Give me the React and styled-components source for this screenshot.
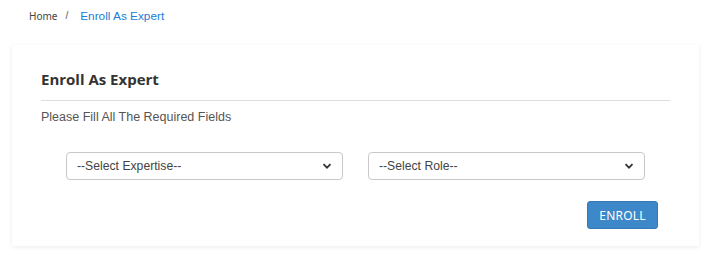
import styled, { createGlobalStyle } from "styled-components";

const GlobalStyle = createGlobalStyle`
  body {
    margin: 0;
    background: #ffffff;
    font-family: "Liberation Sans", Arial, sans-serif;
  }
`;

const Page = styled.div`
  width: 711px;
  height: 255px;
  padding: 0 12px;
  box-sizing: border-box;
`;

const Breadcrumb = styled.div`
  display: flex;
  align-items: center;
  height: 31px;
  padding-left: 17px;
  margin-bottom: 14px;
`;

const Crumb = styled.span`
  font-family: "Noto Sans", sans-serif;
  font-size: 10px;
  color: #444;
`;

const Separator = styled.span`
  font-size: 10px;
  color: #555;
  margin: 0 12px 0 8px;
`;

const Current = styled.span`
  font-size: 11.8px;
  color: #1c7cd6;
`;

const Card = styled.div`
  background: #fff;
  height: 201px;
  box-sizing: border-box;
  padding: 24px 29px 0;
  box-shadow: 0 1px 4px rgba(0, 0, 0, 0.08);
`;

const Title = styled.h2`
  margin: 0;
  font-family: "Open Sans", sans-serif;
  font-weight: 700;
  font-size: 15px;
  color: #333;
  line-height: 20px;
  padding-bottom: 11px;
  border-bottom: 1px solid #ddd;
`;

const Subtitle = styled.p`
  margin: 8px 0 0;
  font-size: 12.5px;
  color: #555;
  line-height: 16px;
`;

const Fields = styled.div`
  display: grid;
  grid-template-columns: 1fr 1fr;
  gap: 25px;
  padding: 0 25px;
  margin-top: 27px;
`;

const SelectBox = styled.div`
  height: 28px;
  border: 1px solid #c9c9c9;
  border-radius: 4px;
  box-sizing: border-box;
  display: flex;
  align-items: center;
  padding: 0 10px;
  font-size: 12.2px;
  color: #444;
`;

const Chevron = styled.svg`
  margin-left: auto;
  width: 10px;
  height: 10px;
`;

const Actions = styled.div`
  display: flex;
  justify-content: flex-end;
  padding-right: 12px;
  margin-top: 21px;
`;

const Button = styled.button`
  height: 28px;
  width: 71px;
  background: #3d88c9;
  border: 1px solid #3479b6;
  border-radius: 3px;
  color: #fff;
  font-family: "Noto Sans", sans-serif;
  font-size: 12px;
  letter-spacing: 0.2px;
  padding: 0;
`;

const Select = ({ label }) => (
  <SelectBox>
    {label}
    <Chevron viewBox="0 0 10 10">
      <path d="M1.5 3.2 L5 6.7 L8.5 3.2" fill="none" stroke="#333" strokeWidth="1.8" />
    </Chevron>
  </SelectBox>
);

export default function App() {
  return (
    <Page>
      <GlobalStyle />
      <Breadcrumb>
        <Crumb>Home</Crumb>
        <Separator>/</Separator>
        <Current>Enroll As Expert</Current>
      </Breadcrumb>
      <Card>
        <Title>Enroll As Expert</Title>
        <Subtitle>Please Fill All The Required Fields</Subtitle>
        <Fields>
          <Select label="--Select Expertise--" />
          <Select label="--Select Role--" />
        </Fields>
        <Actions>
          <Button>ENROLL</Button>
        </Actions>
      </Card>
    </Page>
  );
}
